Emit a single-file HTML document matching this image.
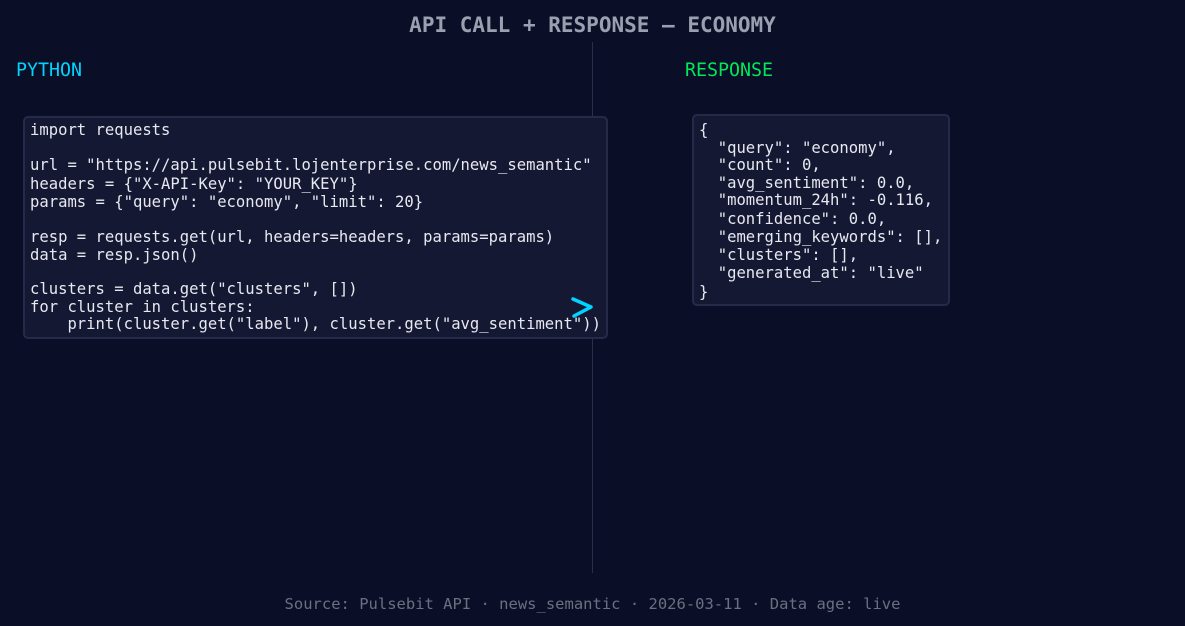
<!DOCTYPE html>
<html><head><meta charset="utf-8"><style>
body{margin:0;width:1185px;height:626px;background:#0a0e27;position:relative;overflow:hidden;font-family:"DejaVu Sans Mono","Liberation Mono",monospace}
.t{position:absolute;white-space:pre;line-height:18px;font-size:15.55px;color:#e8e8f0}
.box{position:absolute;background:#141833;border:2px solid #262a48;border-radius:5px;box-sizing:border-box}
</style></head><body>
<div class="t" style="left:0;width:1185px;text-align:center;top:12px;line-height:26px;font-size:21px;font-weight:bold;color:#9aa0b0">API CALL + RESPONSE — ECONOMY</div>
<div style="position:absolute;left:592px;top:42px;width:1px;height:531px;background:#2a2e4a"></div>
<div class="t" style="left:16px;top:59px;line-height:24px;font-size:18.3px;color:#00d4ff">PYTHON</div>
<div class="t" style="left:685px;top:59px;line-height:24px;font-size:18.3px;color:#00e85a">RESPONSE</div>
<div class="box" style="left:23px;top:116px;width:585px;height:223px"></div>
<div class="box" style="left:692px;top:114px;width:258px;height:192px"></div>
<div class="t" style="left:30px;top:121px">import requests</div>
<div class="t" style="left:30px;top:156px">url = "https://api.pulsebit.lojenterprise.com/news_semantic"</div>
<div class="t" style="left:30px;top:175px">headers = {"X-API-Key": "YOUR_KEY"}</div>
<div class="t" style="left:30px;top:193px">params = {"query": "economy", "limit": 20}</div>
<div class="t" style="left:30px;top:228px">resp = requests.get(url, headers=headers, params=params)</div>
<div class="t" style="left:30px;top:246px">data = resp.json()</div>
<div class="t" style="left:30px;top:280px">clusters = data.get("clusters", [])</div>
<div class="t" style="left:30px;top:298px">for cluster in clusters:</div>
<div class="t" style="left:30px;top:315px">    print(cluster.get("label"), cluster.get("avg_sentiment"))</div>
<svg style="position:absolute;left:570px;top:296px" width="26" height="24"><path d="M3 3 L21 11 L4 20" fill="none" stroke="#00d4ff" stroke-width="3.5" stroke-linecap="round" stroke-linejoin="round"/></svg>
<div class="t" style="left:699px;top:121px">{</div>
<div class="t" style="left:699px;top:139px">  "query": "economy",</div>
<div class="t" style="left:699px;top:156px">  "count": 0,</div>
<div class="t" style="left:699px;top:174px">  "avg_sentiment": 0.0,</div>
<div class="t" style="left:699px;top:191px">  "momentum_24h": -0.116,</div>
<div class="t" style="left:699px;top:210px">  "confidence": 0.0,</div>
<div class="t" style="left:699px;top:228px">  "emerging_keywords": [],</div>
<div class="t" style="left:699px;top:246px">  "clusters": [],</div>
<div class="t" style="left:699px;top:264px">  "generated_at": "live"</div>
<div class="t" style="left:699px;top:283px">}</div>
<div class="t" style="left:0;width:1185px;text-align:center;top:595px;font-size:15.5px;color:#6b7080">Source: Pulsebit API · news_semantic · 2026-03-11 · Data age: live</div>
</body></html>
